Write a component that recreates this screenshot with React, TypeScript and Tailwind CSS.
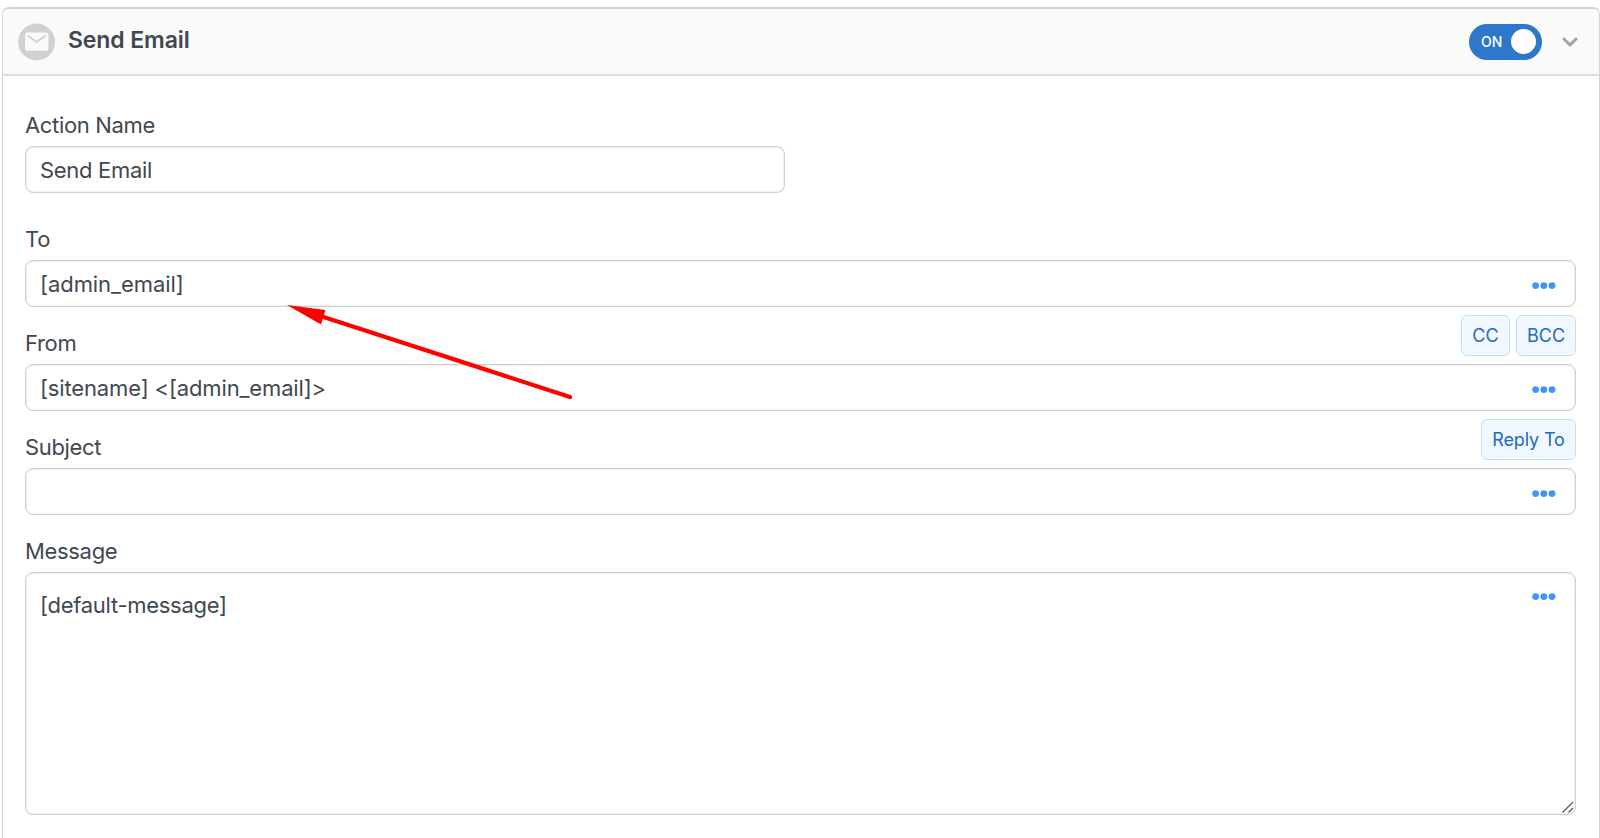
import type { ReactNode } from "react";
import clsx from "clsx";

const Dots = () => (
  <svg width="24" height="8" viewBox="0 0 24 8" fill="#3f95fb" className="shrink-0">
    <circle cx="3.6" cy="3.6" r="3.4" />
    <circle cx="11.8" cy="3.6" r="3.4" />
    <circle cx="20" cy="3.6" r="3.4" />
  </svg>
);

type FieldProps = {
  label: string;
  children?: ReactNode;
  menu?: boolean;
  tall?: boolean;
  className?: string;
  valueClass?: string;
};

const Field = ({ label, children, menu, tall, className, valueClass }: FieldProps) => (
  <div className={className}>
    <div className="h-[34px] text-[22px] leading-[27px] tracking-[-0.33px]">{label}</div>
    <div
      className={clsx(
        "relative flex justify-between rounded-[8px] border border-[#cfd0d2] bg-white pl-3.5 pr-[19px] text-[22px] leading-7 shadow-[inset_0_0_0_1px_#eeeeef]",
        tall ? "h-[243px] items-start pt-[18px]" : "h-[47px] items-center"
      )}
    >
      <span className={valueClass}>{children}</span>
      {menu && (
        <span className={tall ? "mt-[2px]" : "mt-[4px]"}>
          <Dots />
        </span>
      )}
      {tall && (
        <svg
          width="12"
          height="12"
          viewBox="0 0 12 12"
          stroke="#555"
          strokeWidth="1.2"
          className="absolute bottom-px right-px"
        >
          <path d="M0.5 11.5 11 1M6.5 11.5 11 7" />
        </svg>
      )}
    </div>
  </div>
);

const Tag = ({ children, className }: { children: ReactNode; className: string }) => (
  <button
    className={clsx(
      "h-[41px] rounded-md border border-[#bfe0fd] bg-[#f1f8ff] text-lg text-[#2369be]",
      className
    )}
  >
    {children}
  </button>
);

// Row of small buttons hanging under the right end of a field
const Tags = ({ children }: { children: ReactNode }) => (
  <div className="mt-2 -mb-[49px] flex justify-end gap-1.5">{children}</div>
);

const Arrow = () => (
  <svg
    width="290"
    height="100"
    viewBox="0 0 290 100"
    className="pointer-events-none absolute left-[286px] top-[304px]"
  >
    <path d="M36 12.5 284 93" stroke="#fe0000" strokeWidth="4.2" strokeLinecap="round" />
    <path d="M1 1 39.5 6 35 20.5Z" fill="#fe0000" />
  </svg>
);

const Header = () => (
  <header className="flex h-[67px] items-center border-b-2 border-[#dcdddf] bg-[#fafafa] pl-[15px] pr-5">
    <svg width="38" height="38" viewBox="0 0 38 38">
      <circle cx="18.6" cy="19" r="18.5" fill="#d0d1d3" />
      <rect x="7" y="9.6" width="23.4" height="18.2" rx="2.2" fill="#fafafa" />
      <path
        d="M10.4 13.2 18.7 18.9 27 13.2"
        fill="none"
        stroke="#d0d1d3"
        strokeWidth="1.9"
        strokeLinecap="round"
        strokeLinejoin="round"
      />
    </svg>
    <h2 className="-mt-[3px] ml-3 text-[23px] font-semibold leading-8 tracking-[-0.1px]">
      Send Email
    </h2>
    <div className="ml-auto flex h-9 w-[73px] items-center justify-between rounded-full bg-[#2f77ca] pl-3 pr-1.5 text-[14px] font-medium text-white">
      ON
      <span className="h-[25px] w-[25px] rounded-full bg-white" />
    </div>
    <svg
      width="16"
      height="10"
      viewBox="0 0 16 10"
      fill="none"
      stroke="#a1a2a3"
      strokeWidth="3"
      strokeLinecap="round"
      strokeLinejoin="round"
      className="ml-5 mr-px mt-px"
    >
      <path d="M2 2 8 8 14 2" />
    </svg>
  </header>
);

export default function App() {
  return (
    <main className="relative h-[838px] overflow-hidden bg-white pl-0.5 pt-[7px] font-['Inter','Liberation_Sans',sans-serif] text-[#3f4851]">
      <section className="h-[860px] overflow-hidden rounded-[7px] border border-t-2 border-[#d3d4d6]">
        <Header />
        <div className="pl-[22px] pr-[23px] pt-9">
          <Field label="Action Name" className="w-[760px]" valueClass="tracking-[-0.3px]">
            Send Email
          </Field>
          <Field label="To" menu className="mt-[33px]" valueClass="tracking-[-0.07px]">
            [admin_email]
          </Field>
          <Tags>
            <Tag className="w-[49px] tracking-[0.2px]">CC</Tag>
            <Tag className="w-[60px]">BCC</Tag>
          </Tags>
          <Field label="From" menu className="mt-[23px]" valueClass="tracking-[-0.15px]">
            [sitename] &lt;[admin_email]&gt;
          </Field>
          <Tags>
            <Tag className="w-[95px] tracking-[-0.15px]">Reply To</Tag>
          </Tags>
          <Field label="Subject" menu className="mt-[23px]" />
          <Field label="Message" menu tall className="mt-[23px]" valueClass="tracking-[-0.28px]">
            [default-message]
          </Field>
        </div>
      </section>
      <Arrow />
    </main>
  );
}
